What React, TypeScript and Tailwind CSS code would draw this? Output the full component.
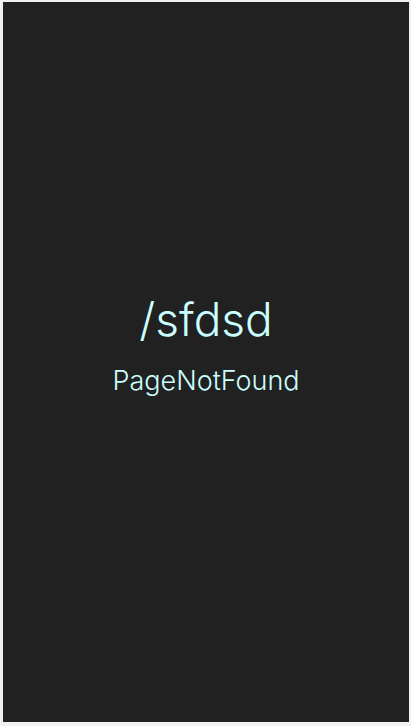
export default function App() {
  return (
    <div className="h-[726px] w-[411px] bg-[#f0f0f0] pl-[3px] pt-[2px] pr-[2px] pb-[4px]">
      <main
        className="flex h-full w-full flex-col items-center justify-center bg-[#212121] pb-[34px] text-[#ccffff]"
        style={{ fontFamily: "Inter, 'Noto Sans', sans-serif" }}
      >
        <h1 className="text-[46px] font-light leading-[52px]">/sfdsd</h1>
        <p className="mt-[19px] text-[27px] font-light leading-[34px]">PageNotFound</p>
      </main>
    </div>
  );
}
